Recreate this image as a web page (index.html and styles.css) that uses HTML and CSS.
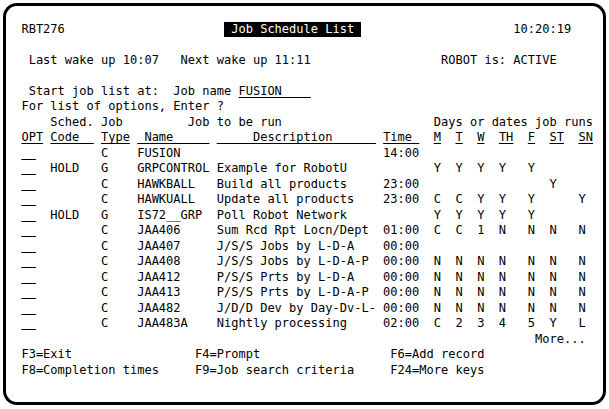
FILE: index.html
```html
<!DOCTYPE html>
<html lang="en">
<head>
<meta charset="utf-8">
<title>Job Schedule List</title>
<link rel="stylesheet" href="styles.css">
</head>
<body>
<div class="screen">
<div class="row"> RBT276                      <span class="rev"> Job Schedule List </span>                     10:20:19</div>
<div class="row"></div>
<div class="row">  Last wake up 10:07   Next wake up 11:11                  ROBOT is: ACTIVE</div>
<div class="row"></div>
<div class="row">  Start job list at:  Job name <span class="u">FUSION    </span></div>
<div class="row"> For list of options, Enter ?</div>
<div class="row">     Sched. Job         Job to be run                     Days or dates job runs</div>
<div class="row"> <span class="u">OPT</span> <span class="u">Code  </span> <span class="u">Type</span> <span class="u"> Name     </span> <span class="u">     Description      </span> <span class="u">Time </span>  <span class="u">M</span>  <span class="u">T</span>  <span class="u">W</span>  <span class="u">TH</span>  <span class="u">F</span>  <span class="u">ST</span>  <span class="u">SN</span></div>
<div class="row"> <span class="u">  </span>         C    FUSION                            14:00</div>
<div class="row"> <span class="u">  </span>  HOLD   G    GRPCONTROL Example for RobotU            Y  Y  Y  Y   Y</div>
<div class="row"> <span class="u">  </span>         C    HAWKBALL   Build all products     23:00                  Y</div>
<div class="row"> <span class="u">  </span>         C    HAWKUALL   Update all products    23:00  C  C  Y  Y   Y      Y</div>
<div class="row"> <span class="u">  </span>  HOLD   G    IS72__GRP  Poll Robot Network            Y  Y  Y  Y   Y</div>
<div class="row"> <span class="u">  </span>         C    JAA406     Sum Rcd Rpt Locn/Dept  01:00  C  C  1  N   N  N   N</div>
<div class="row"> <span class="u">  </span>         C    JAA407     J/S/S Jobs by L-D-A    00:00</div>
<div class="row"> <span class="u">  </span>         C    JAA408     J/S/S Jobs by L-D-A-P  00:00  N  N  N  N   N  N   N</div>
<div class="row"> <span class="u">  </span>         C    JAA412     P/S/S Prts by L-D-A    00:00  N  N  N  N   N  N   N</div>
<div class="row"> <span class="u">  </span>         C    JAA413     P/S/S Prts by L-D-A-P  00:00  N  N  N  N   N  N   N</div>
<div class="row"> <span class="u">  </span>         C    JAA482     J/D/D Dev by Day-Dv-L- 00:00  N  N  N  N   N  N   N</div>
<div class="row"> <span class="u">  </span>         C    JAA483A    Nightly processing     02:00  C  2  3  4   5  Y   L</div>
<div class="row">                                                                        More...</div>
<div class="row"> F3=Exit                 F4=Prompt                  F6=Add record</div>
<div class="row"> F8=Completion times     F9=Job search criteria     F24=More keys</div>
<div class="row"></div>
</div>
</body>
</html>
```
FILE: styles.css
```css
html, body {
  margin: 0;
  padding: 0;
  background: #fff;
}

.screen {
  box-sizing: border-box;
  margin: 3px;
  width: 603px;
  height: 402px;
  border: 3px solid #000;
  border-radius: 14px;
  padding: 15.5px 0 0 8.2px;
  font-family: "DejaVu Sans Mono", "Liberation Mono", monospace;
  font-size: 12.03px;
  line-height: 15.5px;
  color: #000;
}

.row {
  height: 15.5px;
  white-space: pre;
}

.u {
  text-decoration: underline;
  text-decoration-thickness: 1px;
  text-underline-offset: 2px;
  text-decoration-skip-ink: none;
}

.rev {
  display: inline-block;
  vertical-align: top;
  height: 15.5px;
  background: #000;
  color: #fff;
}
```
